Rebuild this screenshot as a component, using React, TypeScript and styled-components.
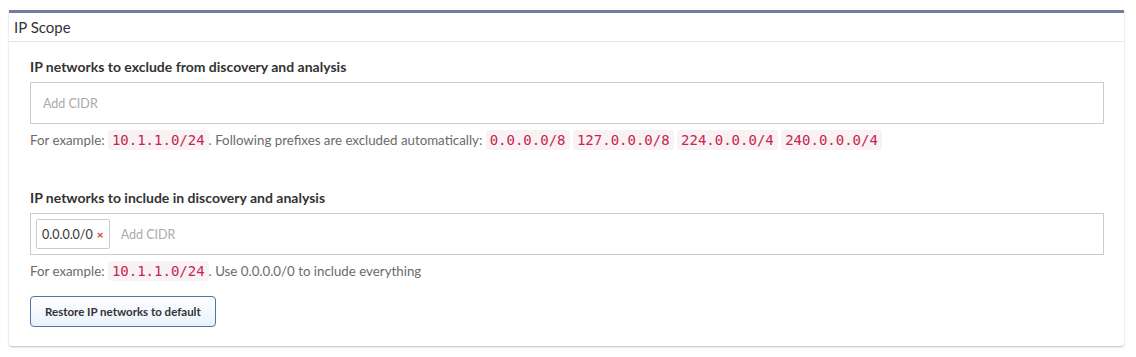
import React from 'react'
import styled, { createGlobalStyle } from 'styled-components'

const GlobalStyle = createGlobalStyle`
    body {
        margin: 0;
        background: #fff;
        font-family: 'Lato', 'Liberation Sans', sans-serif;
        color: #333;
    }
`

const Page = styled.div`
    padding: 10px 12px 10px 9px;
`

const Panel = styled.section`
    border-top: 3px solid #6f7f9b;
    background: #fff;
    box-shadow: 0 1px 2px rgba(0, 0, 0, 0.25);
    border-radius: 0 0 3px 3px;
`

const PanelHeader = styled.header`
    height: 28px;
    padding: 0 5px;
    display: flex;
    align-items: center;
    font-size: 15px;
    color: #333;
    border-bottom: 1px solid #e6e6e6;
`

const PanelBody = styled.div`
    padding: 16px 20px 19px 21px;
`

const FormGroup = styled.div`
    margin-bottom: 39px;
    &:last-of-type {
        margin-bottom: 0;
    }
`

const Label = styled.div`
    font-size: 14px;
    font-weight: 700;
    line-height: 18px;
    color: #333;
    margin-bottom: 6px;
`

const TagInput = styled.div`
    box-sizing: border-box;
    height: 42px;
    border: 1px solid #ccc;
    display: flex;
    align-items: center;
    gap: 11px;
    padding: 0 5px;
`

const Placeholder = styled.span<{ first?: boolean }>`
    font-size: 12.5px;
    color: #aaa;
    padding-left: ${props => props.first ? '7px' : '0'};
`

const Tag = styled.span`
    box-sizing: border-box;
    height: 30px;
    display: inline-flex;
    align-items: center;
    gap: 4px;
    padding: 0 5px;
    border: 1px solid #ccc;
    border-radius: 2px;
    font-size: 12.5px;
    color: #333;
`

const Remove = styled.span`
    color: #d0433a;
    font-weight: 700;
    font-size: 12px;
`

const Help = styled.div`
    margin-top: 6px;
    font-size: 13.3px;
    line-height: 20px;
    color: #6b6b6b;
`

const Code = styled.code`
    font-family: 'DejaVu Sans Mono', monospace;
    font-size: 14px;
    color: #c7254e;
    background: #f9f2f4;
    border-radius: 4px;
    padding: 2px 4px;
`

const Button = styled.button`
    margin-top: 15px;
    height: 31px;
    padding: 0 14px;
    border: 1px solid #4f76a3;
    border-radius: 4px;
    background: linear-gradient(#fff, #e8f2fc);
    font-family: 'Lato', 'Liberation Sans', sans-serif;
    font-size: 11.5px;
    font-weight: 700;
    color: #333;
`

const excluded = ['0.0.0.0/8', '127.0.0.0/8', '224.0.0.0/4', '240.0.0.0/4']

export default function App() {
    return <React.Fragment>
        <GlobalStyle />
        <Page>
            <Panel>
                <PanelHeader>IP Scope</PanelHeader>
                <PanelBody>
                    <FormGroup>
                        <Label>IP networks to exclude from discovery and analysis</Label>
                        <TagInput>
                            <Placeholder first>Add CIDR</Placeholder>
                        </TagInput>
                        <Help>
                            For example: <Code>10.1.1.0/24</Code>. Following prefixes are excluded automatically:
                            {excluded.map(p => <React.Fragment key={p}> <Code>{p}</Code></React.Fragment>)}
                        </Help>
                    </FormGroup>
                    <FormGroup>
                        <Label>IP networks to include in discovery and analysis</Label>
                        <TagInput>
                            <Tag>0.0.0.0/0 <Remove>×</Remove></Tag>
                            <Placeholder>Add CIDR</Placeholder>
                        </TagInput>
                        <Help>
                            For example: <Code>10.1.1.0/24</Code>. Use 0.0.0.0/0 to include everything
                        </Help>
                        <Button>Restore IP networks to default</Button>
                    </FormGroup>
                </PanelBody>
            </Panel>
        </Page>
    </React.Fragment>
}
